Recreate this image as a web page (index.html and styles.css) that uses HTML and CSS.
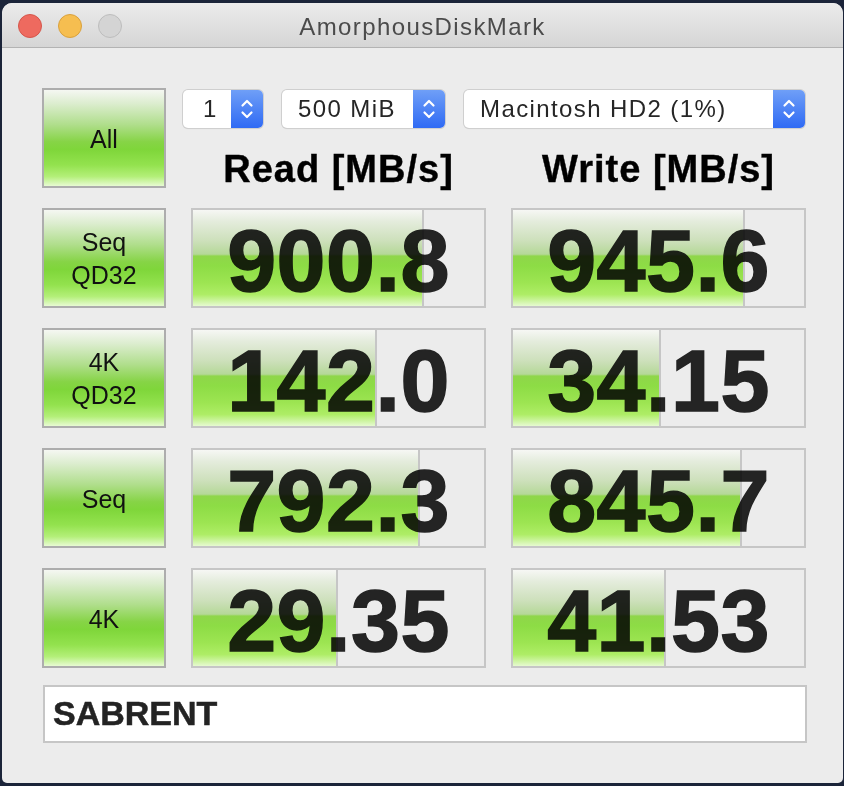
FILE: index.html
```html
<!DOCTYPE html>
<html lang="en">
<head>
    <meta charset="UTF-8">
    <title>AmorphousDiskMark</title>
    <link rel="stylesheet" href="styles.css">
</head>
<body>
<div class="window">
    <div class="titlebar">
        <div class="lights">
            <span class="light light_close"></span>
            <span class="light light_min"></span>
            <span class="light light_max"></span>
        </div>
        <div class="title">AmorphousDiskMark</div>
        <div></div>
    </div>

    <div class="content">
        <div class="board">
            <div class="btn">All</div>
            <div class="head">
                <div class="selects">
                    <div class="select select_count">
                        <span class="select_text">1</span>
                        <span class="stepper"><svg width="14" height="24" viewBox="0 0 14 24"><path d="M2.5 8.5 L7 4 L11.5 8.5 M2.5 15.5 L7 20 L11.5 15.5" fill="none" stroke="#fff" stroke-width="2.2" stroke-linecap="round" stroke-linejoin="round"/></svg></span>
                    </div>
                    <div class="select select_size">
                        <span class="select_text">500 MiB</span>
                        <span class="stepper"><svg width="14" height="24" viewBox="0 0 14 24"><path d="M2.5 8.5 L7 4 L11.5 8.5 M2.5 15.5 L7 20 L11.5 15.5" fill="none" stroke="#fff" stroke-width="2.2" stroke-linecap="round" stroke-linejoin="round"/></svg></span>
                    </div>
                    <div class="select select_disk">
                        <span class="select_text">Macintosh HD2 (1%)</span>
                        <span class="stepper"><svg width="14" height="24" viewBox="0 0 14 24"><path d="M2.5 8.5 L7 4 L11.5 8.5 M2.5 15.5 L7 20 L11.5 15.5" fill="none" stroke="#fff" stroke-width="2.2" stroke-linecap="round" stroke-linejoin="round"/></svg></span>
                    </div>
                </div>
                <div class="titles">
                    <div class="col_title">Read [MB/s]</div>
                    <div class="col_title">Write [MB/s]</div>
                </div>
            </div>

            <!-- Seq QD32 -->
            <div class="btn">Seq<br>QD32</div>
            <div class="result"><span class="fill" style="width: 79.5%"></span><span class="num">900.8</span></div>
            <div class="result"><span class="fill" style="width: 79.8%"></span><span class="num">945.6</span></div>

            <!-- 4K QD32 -->
            <div class="btn">4K<br>QD32</div>
            <div class="result"><span class="fill" style="width: 63.4%"></span><span class="num">142.0</span></div>
            <div class="result"><span class="fill" style="width: 50.7%"></span><span class="num">34.15</span></div>

            <!-- Seq -->
            <div class="btn">Seq</div>
            <div class="result"><span class="fill" style="width: 78%"></span><span class="num">792.3</span></div>
            <div class="result"><span class="fill" style="width: 78.8%"></span><span class="num">845.7</span></div>

            <!-- 4K -->
            <div class="btn">4K</div>
            <div class="result"><span class="fill" style="width: 49.7%"></span><span class="num">29.35</span></div>
            <div class="result"><span class="fill" style="width: 52.7%"></span><span class="num">41.53</span></div>
        </div>

        <div class="name">SABRENT</div>
    </div>
</div>
</body>
</html>
```

FILE: styles.css
```css
* {
    margin: 0;
    padding: 0;
    box-sizing: border-box;
}

body {
    background: #1b2439;
    font-family: "Liberation Sans", Arial, sans-serif;
    width: 844px;
    height: 786px;
    overflow: hidden;
}

.window {
    margin: 3px 0 0 2px;
    width: 841px;
    height: 780px;
    background: #ececec;
    border-radius: 10px 10px 5px 5px;
    overflow: hidden;
}

/* title bar */
.titlebar {
    height: 45px;
    display: grid;
    grid-template-columns: 1fr auto 1fr;
    align-items: center;
    background: linear-gradient(to bottom, #ebebeb, #d5d5d5);
    border-bottom: 1px solid #b3b3b3;
}

.lights {
    display: flex;
    gap: 16px;
    padding-left: 16px;
    padding-top: 2px;
}

.light {
    width: 24px;
    height: 24px;
    border-radius: 50%;
}

.light_close {
    background: #ee6a5f;
    border: 1px solid #d5564b;
}

.light_min {
    background: #f6be50;
    border: 1px solid #d9a13d;
}

.light_max {
    background: #d4d4d4;
    border: 1px solid #bdbdbd;
}

.title {
    font-size: 24px;
    letter-spacing: 1.4px;
    color: #4b4b4b;
    padding-top: 3px;
}

/* main area */
.content {
    padding: 40px 0 0 40px;
}

.board {
    display: grid;
    grid-template-columns: 124px 295px 295px;
    grid-auto-rows: 100px;
    column-gap: 25px;
    row-gap: 20px;
}

.btn {
    border: 2px solid #adadad;
    background: linear-gradient(to bottom, #f5f7f2 0%, #dcedcf 14%, #b0de8c 36%, #86d446 54%, #7fd63a 62%, #93e24e 78%, #b3ef78 90%, #e8fbd3 100%);
    display: flex;
    align-items: center;
    justify-content: center;
    text-align: center;
    font-size: 25px;
    line-height: 33px;
    color: #111;
    padding-top: 2px;
}

.head {
    grid-column: 2 / 4;
    display: flex;
    flex-direction: column;
}

.selects {
    display: flex;
    gap: 19px;
    margin: 2px 0 0 -8px;
}

.select {
    height: 38px;
    display: flex;
    align-items: center;
    background: #fff;
    border-radius: 5px;
    box-shadow: 0 0 0 1px #cfcfcf, 0 1px 1px rgba(0, 0, 0, 0.12);
    overflow: hidden;
}

.select_count {
    width: 80px;
}

.select_size {
    width: 163px;
}

.select_disk {
    width: 341px;
}

.select_text {
    flex: 1;
    font-size: 24px;
    letter-spacing: 1.4px;
    color: #262626;
    padding-left: 16px;
}

.select_count .select_text {
    padding-left: 20px;
}

.stepper {
    width: 32px;
    height: 100%;
    background: linear-gradient(to bottom, #6f9ff7, #2f6af4);
    display: flex;
    align-items: center;
    justify-content: center;
}

.titles {
    display: grid;
    grid-template-columns: 295px 295px;
    column-gap: 25px;
    margin-top: 20px;
}

.col_title {
    text-align: center;
    font-size: 38px;
    font-weight: bold;
    letter-spacing: 1px;
    color: #000;
    -webkit-text-stroke: 0.4px #000;
}

/* result boxes */
.result {
    position: relative;
    border: 2px solid #c6c6c6;
    background: #ececec;
    display: flex;
    align-items: center;
    justify-content: center;
}

.fill {
    position: absolute;
    left: 0;
    top: 0;
    bottom: 0;
    border-right: 2px solid #c6c6c6;
    background: linear-gradient(to bottom, #f6f7f4 0%, #e4ecdc 12%, #cde0bb 32%, #b5d898 46%, #8fd64a 48%, #8ddc45 58%, #9de552 76%, #aeed66 88%, #e6fad0 100%);
}

.num {
    position: relative;
    font-size: 88px;
    font-weight: bold;
    color: #262626;
    -webkit-text-stroke: 1.5px #262626;
    mix-blend-mode: multiply;
    padding-top: 6px;
    letter-spacing: 0.5px;
}

.name {
    margin-top: 17px;
    width: 764px;
    height: 58px;
    background: #fff;
    border: 2px solid #c6c6c6;
    font-size: 34px;
    font-weight: bold;
    color: #232323;
    -webkit-text-stroke: 0.5px #232323;
    padding: 7px 0 0 8px;
    margin-left: 1px;
}
```
